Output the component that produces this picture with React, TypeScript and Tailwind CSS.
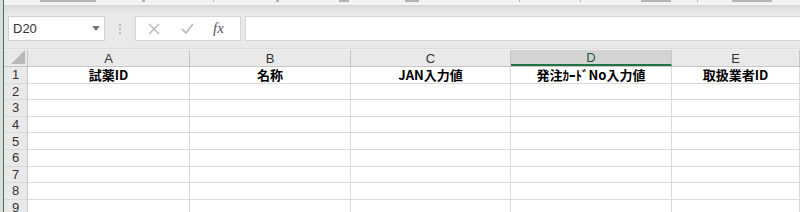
const cols = [
  { key: 'A', width: 'w-[162px]', title: '試薬ID' },
  { key: 'B', width: 'w-[161px]', title: '名称' },
  { key: 'C', width: 'w-[160px]', title: 'JAN入力値' },
  { key: 'D', width: 'w-[161px]', title: '発注ｶｰﾄﾞNo入力値' },
  { key: 'E', width: 'flex-1', title: '取扱業者ID' },
];

const rows = [1, 2, 3, 4, 5, 6, 7, 8, 9];

// bottoms of the ribbon group labels peeking out above the formula bar
const ribbonMarks = [
  { left: 'ml-[36px]', w: 'w-[56px]' },
  { left: 'ml-[46px]', w: 'w-[3px]' },
  { left: 'ml-[68px]', w: 'w-[1px]' },
  { left: 'ml-[62px]', w: 'w-[3px]' },
  { left: 'ml-[60px]', w: 'w-[10px]' },
  { left: 'ml-[56px]', w: 'w-[14px]' },
  { left: 'ml-[100px]', w: 'w-[1px]' },
  { left: 'ml-[60px]', w: 'w-[1px]' },
  { left: 'ml-[60px]', w: 'w-[30px]' },
  { left: 'ml-[26px]', w: 'w-[1px]' },
  { left: 'ml-[34px]', w: 'w-[40px]' },
];

const App = () => {
  const activeCol = 'D';

  return (
    <div className="w-[800px] h-[212px] overflow-hidden flex bg-white font-['Liberation_Sans','Noto_Sans_CJK_JP',sans-serif]">
      {/* window edge */}
      <div className="w-[3px] shrink-0 bg-[#dcdcdc]" />
      <div className="w-[1px] shrink-0 bg-[#3b7352]" />

      <div className="flex-1 flex flex-col min-w-0">
        {/* ribbon bottom, cut off */}
        <div className="h-[5px] shrink-0 bg-[#f3f3f3] flex items-start">
          {ribbonMarks.map((m, i) => (
            <span key={i} className={`${m.left} ${m.w} h-[2px] bg-[#b4b4b4] shrink-0`} />
          ))}
        </div>

        {/* formula bar */}
        <div className="h-[43px] shrink-0 bg-gradient-to-b from-[#d9d9d9] via-[#e9e9e9] via-20% to-[#e9e9e9] flex items-center pt-[4px]">
          <div className="ml-[4px] w-[97px] h-[25px] bg-white border border-[#d0d0d0] flex items-center justify-between pl-[4px] pr-[4px]">
            <span className="text-[13px] text-[#333]">D20</span>
            <svg width="8" height="5" viewBox="0 0 8 5" className="text-[#777]">
              <path d="M0 0 L8 0 L4 5 Z" fill="currentColor" />
            </svg>
          </div>
          <div className="w-[30px] flex flex-col items-center gap-[2px]">
            <span className="w-[2px] h-[2px] bg-[#aaa] rounded-full" />
            <span className="w-[2px] h-[2px] bg-[#aaa] rounded-full" />
            <span className="w-[2px] h-[2px] bg-[#aaa] rounded-full" />
          </div>
          <div className="w-[106px] h-[25px] bg-white border border-[#d6d6d6] flex items-center text-[#b5b5b5]">
            <svg width="12" height="12" viewBox="0 0 12 12" className="ml-[12px]">
              <path d="M1 1 L11 11 M11 1 L1 11" stroke="currentColor" strokeWidth="1.3" />
            </svg>
            <svg width="13" height="11" viewBox="0 0 13 11" className="ml-[21px]">
              <path d="M1 6 L5 10 L12 1" stroke="currentColor" strokeWidth="1.6" fill="none" />
            </svg>
            <span className="ml-[19px] text-[15px] italic text-[#555] font-['Liberation_Serif',serif]">fx</span>
          </div>
          <div className="ml-[4px] flex-1 h-[25px] bg-white border-y border-l border-[#d6d6d6]" />
        </div>

        {/* gap below formula bar */}
        <div className="h-[2px] shrink-0 bg-[#f0f0f0] border-t border-[#dcdcdc]" />

        {/* sheet */}
        <div className="flex-1 flex flex-col">
          <div className="h-[17px] shrink-0 flex bg-[#e9e9e9] border-b border-[#c6c6c6]">
            <div className="w-[24px] border-r border-[#c6c6c6] flex items-end justify-end pr-[2px] pb-[2px]">
              <svg width="14" height="14" viewBox="0 0 14 14">
                <path d="M14 0 L14 14 L0 14 Z" fill="#b8b8b8" />
              </svg>
            </div>
            {cols.map((c) => (
              <div
                key={c.key}
                className={`${c.width} ${
                  c.key === activeCol ? 'bg-[#d3d3d3] border-b-2 border-b-[#217346] text-[#1f5a38]' : 'text-[#333]'
                } border-r border-[#c6c6c6] flex items-center justify-center text-[13px] leading-none`}
              >
                {c.key}
              </div>
            ))}
          </div>

          {rows.map((r) => (
            <div key={r} className="h-[16.6px] shrink-0 flex border-b border-[#dadada]">
              <div className="w-[24px] bg-[#e9e9e9] border-r border-[#c6c6c6] flex items-center justify-center text-[13px] text-[#333] leading-none">
                {r}
              </div>
              {cols.map((c) => (
                <div
                  key={c.key}
                  className={`${c.width} border-r border-[#dadada] flex items-center justify-center text-[13px] leading-none font-bold text-black font-['Noto_Sans_CJK_JP',sans-serif]`}
                >
                  {r === 1 ? c.title : ''}
                </div>
              ))}
            </div>
          ))}
        </div>
      </div>
    </div>
  );
};

export default App;
